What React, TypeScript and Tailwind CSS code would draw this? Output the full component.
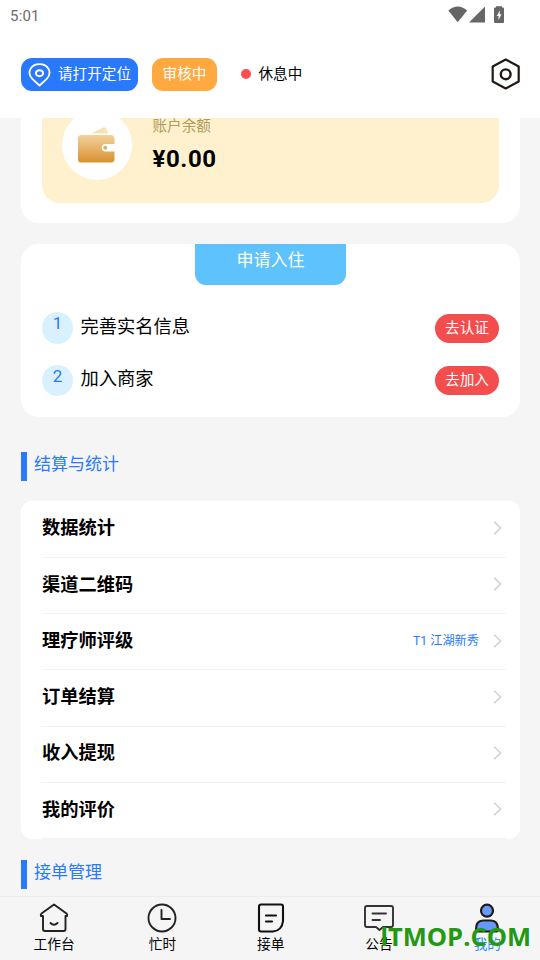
import type { ReactNode } from 'react';

type Step = {
  id: number;
  title: string;
  action: string;
};

type MenuItem = {
  title: string;
  note?: string;
};

const steps: Step[] = [
  { id: 1, title: '完善实名信息', action: '去认证' },
  { id: 2, title: '加入商家', action: '去加入' },
];

const menuItems: MenuItem[] = [
  { title: '数据统计' },
  { title: '渠道二维码' },
  { title: '理疗师评级', note: 'T1 江湖新秀' },
  { title: '订单结算' },
  { title: '收入提现' },
  { title: '我的评价' },
];

// Android status bar
const StatusBar = () => (
  <div className="flex h-8 items-center justify-between pl-[10px] pr-[34px] text-[#6b6b6b]">
    <span className="text-[15px] leading-8 tracking-[0.2px]">5:01</span>
    <svg width="58" height="18" viewBox="0 0 58 18" fill="#666" className="-mt-[3px]">
      <path d="M0.300 4.500Q9.700 -3.500 19.200 4.500L9.700 16.200Z" />
      <path d="M21 16.500L37 0.500V16.500Z" />
      <path d="M48 1.500V0.200H54V1.500H55Q56 1.500 56 2.500V16Q56 17 55 17H47Q46 17 46 16V2.500Q46 1.500 47 1.500Z" />
      <path d="M51.700 4.500L48.800 10H50.500V14L53.500 8.300H51.700Z" fill="#fff" />
    </svg>
  </div>
);

const PinIcon = () => (
  <svg width="24" height="24" viewBox="0 0 24 24" fill="none" stroke="#fff" strokeWidth="1.8">
    <path d="M12.500 22.500L5.500 16.200C-1 9.500 4 1.200 12.500 1.200S26 9.500 19.500 16.200Z" strokeLinejoin="round" />
    <ellipse cx="12.500" cy="10.200" rx="3.600" ry="3" strokeWidth="2" />
  </svg>
);

const SettingsIcon = () => (
  <svg width="30" height="32" viewBox="0 0 30 32" fill="none" stroke="#231815" strokeLinejoin="round">
    <path d="M14.700 1.500L27.700 8.500V23.500L14.700 30.500L1.700 23.500V8.500Z" strokeWidth="2.200" />
    <circle cx="14.700" cy="16.300" r="4.900" strokeWidth="2.400" />
  </svg>
);

const WalletIcon = () => (
  <svg width="38" height="38" viewBox="0 0 38 38" className="-ml-[2px]">
    <defs>
      <linearGradient id="wallet" x1="0" y1="0" x2="0" y2="1">
        <stop offset="0" stopColor="#f2d29c" />
        <stop offset="1" stopColor="#d8912f" />
      </linearGradient>
    </defs>
    <path d="M14 7.500L26 1.500Q28 0.800 29 2.500L31.500 7.500Z" fill="#f7e2b8" />
    <path
      d="M4 9H34Q37.500 9 37.500 12.500V18H28.500A3.500 3.500 0 0 0 28.500 25.500H37.500V33Q37.500 36.500 34 36.500H4Q1 36.500 1 33V12.500Q1 9 4 9Z"
      fill="url(#wallet)"
    />
    <circle cx="28.300" cy="21.700" r="2" fill="#e5ad5d" />
  </svg>
);

const Chevron = () => (
  <svg width="9" height="14" viewBox="0 0 9 14" fill="none" stroke="#d0d0d0" strokeWidth="1.5">
    <path d="M1.200 0.800L7.600 7L1.200 13.200" />
  </svg>
);

const SectionTitle = ({ children }: { children: ReactNode }) => (
  <div className="flex h-[29px] border-l-[6px] border-[#2979ff] pl-[7px] text-[17px] leading-6 text-[#2979ff]">
    {children}
  </div>
);

const TabItem = ({ label, active, children }: { label: string; active?: boolean; children: ReactNode }) => (
  <div className="flex flex-1 flex-col items-center pt-[5px]">
    <svg width="32" height="32" viewBox="0 0 32 32" fill="none" strokeLinecap="round" strokeLinejoin="round">
      {children}
    </svg>
    <span className={active ? 'text-[13.7px] leading-5 text-[#2f8cff]' : 'text-[13.7px] leading-5 text-black'}>
      {label}
    </span>
  </div>
);

export default function App() {
  return (
    <div className="flex h-screen w-full flex-col overflow-hidden bg-[#f5f5f5] font-[Roboto,'Noto_Sans_CJK_SC',sans-serif] text-black">
      {/* Header */}
      <header className="h-[118px] shrink-0 bg-white">
        <StatusBar />
        <div className="mt-[26px] flex h-[33px] items-center pl-[21px] pr-[19px] text-[14.6px]">
          <div className="flex h-[33px] w-[117px] items-center gap-[7px] rounded-[11px] bg-[#2979ff] pl-[6px] text-white">
            <PinIcon />
            <span className="whitespace-nowrap">请打开定位</span>
          </div>
          <div className="ml-[14px] flex h-[33px] w-[65px] items-center justify-center rounded-[11px] bg-[#ffa940] text-white">
            审核中
          </div>
          <span className="mb-px ml-6 h-[10px] w-[10px] rounded-full bg-[#ff4d4f]" />
          <span className="ml-[7.500px]">休息中</span>
          <div className="mb-[2px] ml-auto">
            <SettingsIcon />
          </div>
        </div>
      </header>

      {/* Scrolled content */}
      <main className="min-h-0 flex-1 overflow-hidden pr-5 pl-[21px]">
        {/* Balance */}
        <section className="-mt-5 rounded-[18px] bg-white px-[21px] pb-5">
          <div className="flex h-[105px] rounded-[18px] bg-[#fff1ce] pl-5 pt-[12px]">
            <div className="flex h-[70px] w-[70px] items-center justify-center rounded-full bg-white">
              <WalletIcon />
            </div>
            <div className="ml-[20.500px] pt-[5px]">
              <div className="text-[14.6px] leading-[22px] text-[#b39a5b]">账户余额</div>
              <div className="mt-[8px] text-2xl leading-7 font-bold tracking-[0.6px]">¥0.00</div>
            </div>
          </div>
        </section>

        {/* Onboarding steps */}
        <section className="mt-[21px] h-[173px] rounded-[18px] bg-white px-[21px]">
          <div className="mx-auto h-[41px] w-[151px] rounded-b-[11px] bg-[#5ec2fd] text-center text-[17px] leading-8 text-white">
            申请入住
          </div>
          <div className="flex flex-col gap-[20.6px] pt-[27px]">
            {steps.map((step) => (
              <div key={step.id} className="flex h-8 items-start">
                <span className="h-[31.500px] w-[31px] rounded-full bg-[#d9f1ff] text-center text-[17px] leading-[23px] text-[#2979ff]">
                  {step.id}
                </span>
                <span className="ml-[7.500px] pt-[0.900px] text-[18.25px] leading-7">{step.title}</span>
                <button className="mt-[1.600px] ml-auto h-[29px] w-16 rounded-full bg-[#f34d4d] text-[14.6px] leading-[29px] text-white">
                  {step.action}
                </button>
              </div>
            ))}
          </div>
        </section>

        <div className="mt-[35px]">
          <SectionTitle>结算与统计</SectionTitle>
        </div>

        {/* Menu list */}
        <section className="mt-5 rounded-[11px] bg-white pt-[0.500px] pl-[21px] pr-[14px]">
          {menuItems.map((item) => (
            <div key={item.title} className="flex h-[56.25px] items-center border-b border-[#f3f3f3] pr-1 pb-[2px]">
              <span className="pt-[0.500px] text-[18.25px] leading-7 font-bold">{item.title}</span>
              {item.note && <span className="mr-[14px] ml-auto pt-px text-[12.2px] text-[#2979ff]">{item.note}</span>}
              <span className={item.note ? '' : 'ml-auto'}>
                <Chevron />
              </span>
            </div>
          ))}
        </section>

        <div className="mt-[21px]">
          <SectionTitle>接单管理</SectionTitle>
        </div>
      </main>

      {/* Bottom tabs */}
      <nav className="relative -mr-[1.500px] flex h-16 shrink-0 border-t border-[#ececec] bg-[#f5f5f5]">
        <TabItem label="工作台">
          <path
            d="M5 14H3Q2.300 12.500 3.500 11.500L16 2.500L28.500 11.500Q29.700 12.500 29 14H27.500V27Q27.500 29 25.500 29H7Q5 29 5 27Z"
            stroke="#222"
            strokeWidth="1.9"
          />
          <path d="M12.500 21Q16 24.500 19.500 21" stroke="#222" strokeWidth="1.9" />
        </TabItem>
        <TabItem label="忙时">
          <circle cx="16" cy="16" r="13.500" stroke="#222" strokeWidth="1.9" />
          <path d="M15.500 8V17H24" stroke="#222" strokeWidth="1.9" />
        </TabItem>
        <TabItem label="接单">
          <path d="M6 2.500H26Q28 2.500 28 4.500V19Q27 28.500 18 29.500H6Q4 29.500 4 27.500V4.500Q4 2.500 6 2.500Z" stroke="#111" strokeWidth="2.100" />
          <path d="M11 13.500H21M11 19.500H17" stroke="#111" strokeWidth="2.100" />
        </TabItem>
        <TabItem label="公告">
          <path d="M4 4H28Q30 4 30 6V23Q30 25 28 25H20L16.500 28L13 25H4Q2 25 2 23V6Q2 4 4 4Z" stroke="#333" strokeWidth="1.9" />
          <path d="M9.500 11.500H23M9.500 18H17" stroke="#333" strokeWidth="1.9" />
        </TabItem>
        <TabItem label="我的" active>
          <circle cx="16" cy="8.700" r="6" fill="#6699ff" stroke="#231815" strokeWidth="2.200" />
          <path
            d="M5 27.500Q5 18.500 12 18.500H20Q27 18.500 27 27.500Q27 29.500 25 29.500H7Q5 29.500 5 27.500Z"
            fill="#6699ff"
            stroke="#231815"
            strokeWidth="2.200"
          />
        </TabItem>
        <div className="absolute top-[21px] right-[10.500px] font-['Open_Sans',sans-serif] text-[25.5px] leading-9 font-bold whitespace-nowrap text-[#229813]">
          <span className="font-[Roboto,sans-serif]">I</span>TMOP.COM
        </div>
      </nav>
    </div>
  );
}
